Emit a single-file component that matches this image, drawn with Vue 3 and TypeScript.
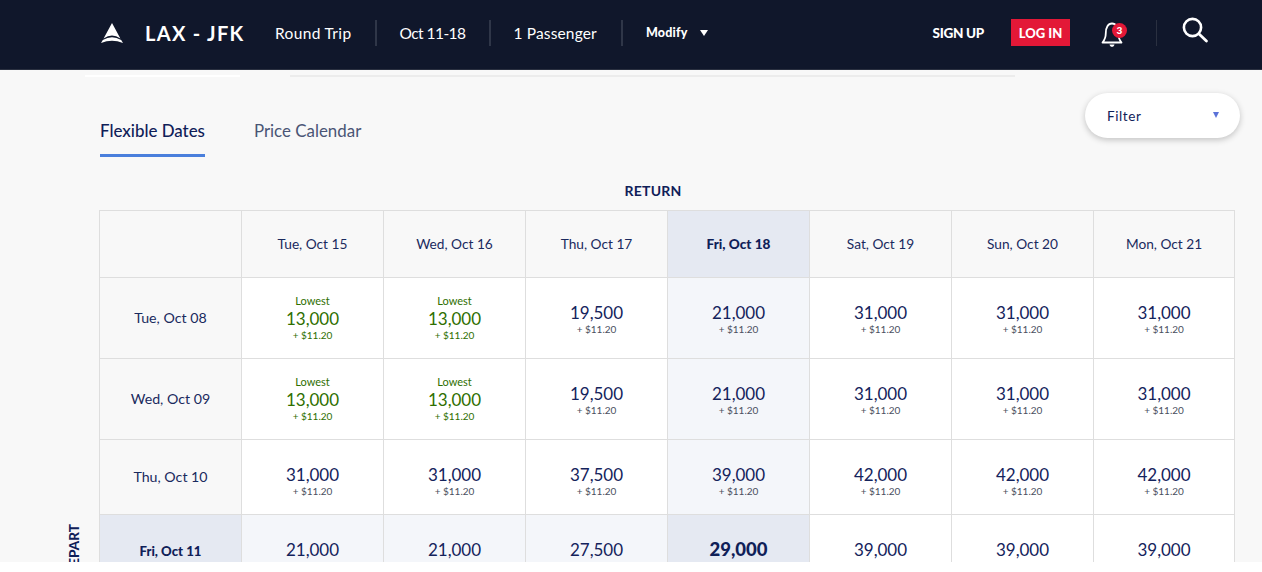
<script setup lang="ts">
interface Row { label: string; cells: string[]; lowest: number; tall: boolean; selected?: boolean }

const returnDates = ['Tue, Oct 15', 'Wed, Oct 16', 'Thu, Oct 17', 'Fri, Oct 18', 'Sat, Oct 19', 'Sun, Oct 20', 'Mon, Oct 21']
const selectedCol = 3
const rows: Row[] = [
  { label: 'Tue, Oct 08', cells: ['13,000', '13,000', '19,500', '21,000', '31,000', '31,000', '31,000'], lowest: 2, tall: true },
  { label: 'Wed, Oct 09', cells: ['13,000', '13,000', '19,500', '21,000', '31,000', '31,000', '31,000'], lowest: 2, tall: true },
  { label: 'Thu, Oct 10', cells: ['31,000', '31,000', '37,500', '39,000', '42,000', '42,000', '42,000'], lowest: 0, tall: false },
  { label: 'Fri, Oct 11', cells: ['21,000', '21,000', '27,500', '29,000', '39,000', '39,000', '39,000'], lowest: 0, tall: false, selected: true },
]
</script>

<template>
  <div class="page">
    <div class="viewport">
      <header class="topbar">
        <svg class="logo" viewBox="0 0 22 20" width="22" height="20" aria-hidden="true">
          <path d="M11 0 L19.4 15.4 Q11 9.6 2.6 15.4 Z" fill="#fff" />
          <path d="M1.8 17 Q11 11.4 20.2 17 L22 20 Q11 15.4 0 20 Z" fill="#fff" />
        </svg>
        <span class="route">LAX - JFK</span>
        <span class="trip trip-first">Round Trip</span>
        <span class="bar"></span>
        <span class="trip dates">Oct 11-18</span>
        <span class="bar"></span>
        <span class="trip pax">1 Passenger</span>
        <span class="bar"></span>
        <span class="modify">Modify</span>
        <span class="caret-white"></span>
        <span class="spacer"></span>
        <span class="signup">SIGN UP</span>
        <span class="login">LOG IN</span>
        <span class="bell-wrap">
          <svg viewBox="0 0 22 26" width="22" height="26" aria-hidden="true">
            <path d="M1.5 21.5 C3.6 19 4.8 16 4.8 12 C4.8 6.5 7 2.5 11 2.5 C15 2.5 17.2 6.5 17.2 12 C17.2 16 18.4 19 20.5 21.5 Z" fill="none" stroke="#fff" stroke-width="1.8" stroke-linejoin="round" />
            <path d="M8.5 23.4 H13.5 C13.2 25 12.2 25.8 11 25.8 C9.8 25.8 8.8 25 8.5 23.4 Z" fill="#fff" />
          </svg>
          <span class="badge">3</span>
        </span>
        <span class="thin-bar"></span>
        <svg class="search" viewBox="0 0 26 26" width="26" height="26" aria-hidden="true">
          <circle cx="10.5" cy="10.5" r="8.6" fill="none" stroke="#fff" stroke-width="2.6" />
          <path d="M16.8 16.8 L24.4 24" stroke="#fff" stroke-width="2.8" stroke-linecap="round" />
        </svg>
      </header>

      <div class="ghost">
        <span class="ghost-white"></span>
        <span class="ghost-line"></span>
      </div>

      <main class="content">
        <div class="toolbar">
          <nav class="tabs">
            <span class="tab active">Flexible Dates</span>
            <span class="tab">Price Calendar</span>
          </nav>
          <div class="filter">
            <span>Filter</span>
            <span class="caret-blue"></span>
          </div>
        </div>

        <div class="return-label">RETURN</div>

        <div class="grid-wrap">
          <div class="depart-col"><span class="depart">DEPART</span></div>
          <div class="grid">
            <div class="cell head corner"></div>
            <div
              v-for="(d, i) in returnDates"
              :key="d"
              class="cell head"
              :class="{ 'sel-strong': i === selectedCol }"
            >{{ d }}</div>

            <template v-for="r in rows" :key="r.label">
              <div class="cell side" :class="{ tall: r.tall, short: !r.tall, 'sel-strong': r.selected }">{{ r.label }}</div>
              <div
                v-for="(p, i) in r.cells"
                :key="i"
                class="cell fare"
                :class="{
                  tall: r.tall,
                  short: !r.tall,
                  green: i < r.lowest,
                  'sel-soft': (r.selected && i < selectedCol) || (!r.selected && i === selectedCol),
                  'sel-strong': r.selected && i === selectedCol,
                }"
              >
                <span v-if="i < r.lowest" class="lowest">Lowest</span>
                <span class="price">{{ p }}</span>
                <span class="fee">+ $11.20</span>
              </div>
            </template>
          </div>
        </div>
      </main>
    </div>
  </div>
</template>

<style>
html, body { margin: 0; background: #fff; }
</style>

<style scoped>
.page {
  width: 1262px;
  height: 572px;
  overflow: hidden;
  background: #fff;
  font-family: Lato, "Open Sans", sans-serif;
}
.viewport {
  height: 562px;
  overflow: hidden;
  background: #f8f8f8;
}
.topbar {
  box-sizing: border-box;
  height: 70px;
  padding: 0 0 4px 101px;
  background: #10172b;
  display: flex;
  align-items: center;
  color: #fff;
  border-bottom: 1px solid #2a3040;
}
.logo { flex: none; margin-right: 22px; }
.route { font-size: 20px; font-weight: 700; letter-spacing: 1.3px; white-space: nowrap; width: 100px; }
.trip { font-size: 15.5px; letter-spacing: 0.35px; white-space: nowrap; }
.dates { letter-spacing: -0.55px; }
.pax { letter-spacing: 0.15px; }
.trip-first { margin-left: 30px; }
.bar { width: 2px; height: 26px; background: #2f3648; margin: 0 22px 0 24px; flex: none; }
.modify { font-size: 12.5px; font-weight: 900; letter-spacing: 0.2px; margin-left: 1px; }
.caret-white {
  width: 0; height: 0; margin-left: 12px;
  border-left: 4.5px solid transparent;
  border-right: 4.5px solid transparent;
  border-top: 6px solid #fff;
}
.spacer { flex: 1; }
.signup { font-size: 13.5px; font-weight: 900; letter-spacing: -0.3px; white-space: nowrap; }
.login {
  width: 59px; height: 27px; margin-left: 27px;
  background: #e31837;
  font-size: 13px; font-weight: 900;
  display: flex; align-items: center; justify-content: center;
  white-space: nowrap;
}
.bell-wrap { position: relative; width: 22px; height: 26px; margin-left: 31px; margin-top: 3px; }
.badge {
  position: absolute; left: 11px; top: 1.5px;
  width: 15px; height: 15px; border-radius: 50%;
  background: #e31837;
  font-size: 10px; font-weight: 900; line-height: 15px; text-align: center;
}
.thin-bar { width: 1px; height: 26px; background: #2a3040; margin: 0 25px 0 33px; }
.search { margin-right: 54px; margin-top: -5px; flex: none; }

.ghost { height: 2px; margin-top: 5px; padding-left: 85px; display: flex; }
.ghost-white { width: 155px; background: #fff; }
.ghost-line { width: 725px; margin-left: 50px; background: #ececec; }

.toolbar {
  display: flex;
  justify-content: space-between;
  align-items: flex-start;
  padding: 16px 22px 0 100px;
  height: 89px;
}
.tabs { display: flex; gap: 49px; padding-top: 26px; }
.tab { font-size: 16.9px; color: #4a5575; padding-bottom: 11px; line-height: 24px; border-bottom: 3px solid transparent; white-space: nowrap; }
.tab.active { color: #0f2058; border-bottom-color: #4a7fdc; font-weight: 500; }
.filter {
  width: 155px; height: 45px; box-sizing: border-box;
  padding: 0 21px 0 22px;
  background: #fff; border-radius: 23px;
  box-shadow: 0 2px 6px rgba(0, 0, 0, 0.22);
  display: flex; justify-content: space-between; align-items: center;
  font-size: 13.5px; letter-spacing: 0.6px; color: #0f2058;
}
.caret-blue {
  width: 0; height: 0; margin-top: -2px;
  border-left: 3.5px solid transparent;
  border-right: 3.5px solid transparent;
  border-top: 6px solid #5b72d8;
}
.return-label {
  text-align: center;
  margin-left: 44px;
  margin-bottom: 11px;
  font-size: 14px; font-weight: 700; color: #0f2058; letter-spacing: 0.2px;
  line-height: 17px;
}
.grid-wrap { display: flex; align-items: flex-start; }
.depart-col { width: 99px; flex: none; display: flex; justify-content: flex-end; padding-right: 17px; box-sizing: border-box; padding-top: 314px; }
.depart {
  writing-mode: vertical-rl;
  transform: rotate(180deg);
  font-size: 13.5px; font-weight: 900; color: #0f2058; line-height: 15px;
}
.grid {
  display: grid;
  grid-template-columns: repeat(7, 142px) 141px;
  border-top: 1px solid #dedede;
  border-left: 1px solid #dedede;
  flex: none;
}
.cell {
  box-sizing: border-box;
  border-right: 1px solid #dedede;
  border-bottom: 1px solid #dedede;
  display: flex; flex-direction: column; align-items: center; justify-content: center;
  color: #1a2a5e;
}
.head { height: 67px; background: #f8f8f8; font-size: 13.7px; padding-bottom: 1px; }
.head.sel-strong { background: #e5e9f2; font-weight: 900; color: #0f2058; font-size: 13.6px; }
.side { background: #f8f8f8; font-size: 14.2px; padding-bottom: 2px; }
.side.sel-strong { background: #e5e9f2; font-weight: 900; color: #0f2058; font-size: 13.2px; }
.tall { height: 81px; }
.short { height: 75px; }
.fare { background: #fff; justify-content: flex-start; padding-top: 24px; }
.fare.green { padding-top: 17px; }
.fare.sel-soft { background: #f4f6fa; }
.fare.sel-strong { background: #e5e9f2; }
.lowest { font-size: 11px; line-height: 12px; color: #2f6f00; margin-bottom: 1px; }
.price { font-size: 17px; line-height: 21px; font-weight: 400; color: #14235c; }
.sel-strong .price { font-weight: 900; font-size: 18.5px; color: #0f2058; }
.fee { font-size: 10px; line-height: 12px; color: #4a4f60; }
.green .price, .green .fee { color: #2f6f00; }
</style>
